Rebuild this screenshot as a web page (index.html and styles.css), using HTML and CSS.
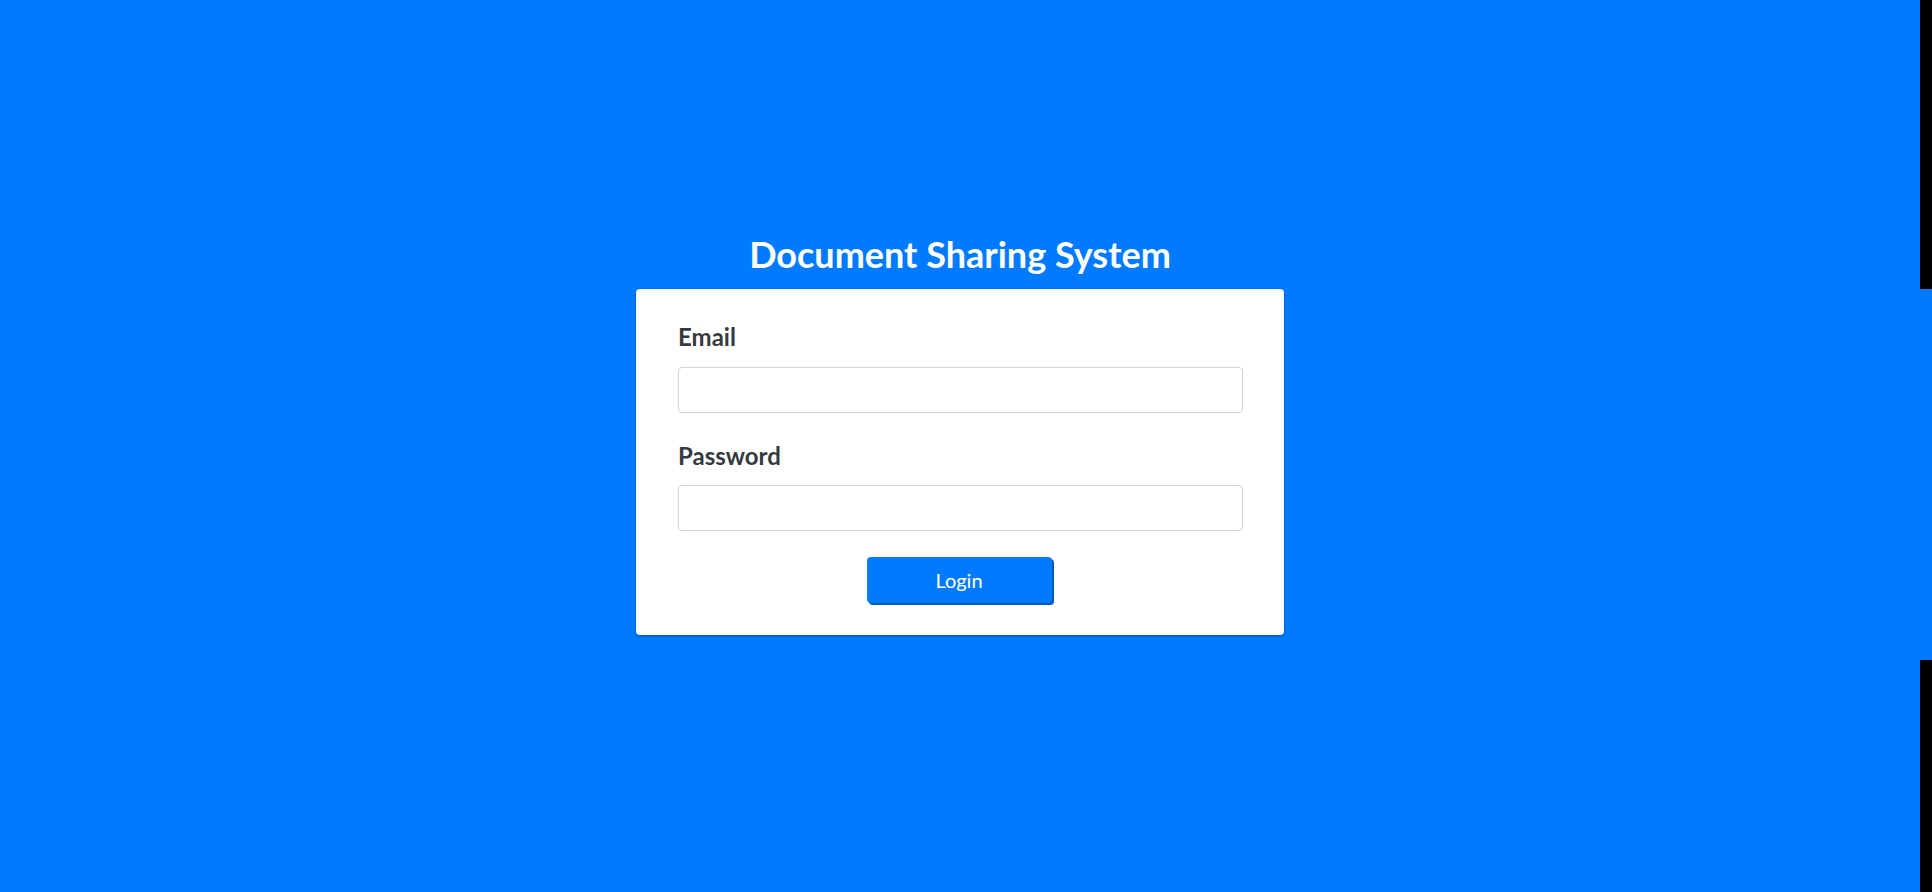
FILE: index.html
```html
<!DOCTYPE html>
<html lang="en">
<head>
<meta charset="utf-8">
<title>Document Sharing System</title>
<link rel="stylesheet" href="styles.css">
</head>
<body>
  <div class="page">
    <h1 class="title">Document Sharing System</h1>
    <div class="stage">
      <form class="card" onsubmit="return false">
        <label class="label" for="email">Email</label>
        <input class="field" id="email" type="email">
        <label class="label label-pw" for="password">Password</label>
        <input class="field" id="password" type="password">
        <div class="actions">
          <button class="btn" type="submit">Login</button>
        </div>
      </form>
    </div>
  </div>
</body>
</html>
```
FILE: styles.css
```css
body {
  margin: 0;
  background: #000;
  font-family: "Source Sans Pro", Lato, "Noto Sans", sans-serif;
}
.page {
  display: flex;
  flex-direction: column;
  width: 1920px;
  min-height: 100vh;
  box-sizing: border-box;
  padding-top: 233px;
  background: #007bff;
}
.title {
  margin: 0 0 13px;
  text-align: center;
  color: #fff;
  font-size: 36px;
  line-height: 43px;
  font-weight: 700;
}
.stage {
  display: flex;
  justify-content: center;
  margin-right: -12px;
  padding-right: 12px;
  padding-bottom: 25px;
  background: #007bff;
}
.card {
  width: 648px;
  box-sizing: border-box;
  background: #fff;
  border-radius: 4px;
  box-shadow: 0 1px 3px rgba(0, 0, 0, 0.35);
  padding: 33px 41px 30px 42px;
  display: flex;
  flex-direction: column;
}
.label {
  display: block;
  color: #343a40;
  font-size: 24px;
  font-weight: 700;
  line-height: 29px;
  margin-bottom: 16px;
}
.label-pw {
  margin-top: 28px;
  margin-bottom: 15px;
}
.field {
  display: block;
  box-sizing: border-box;
  width: 565px;
  height: 46px;
  border: 1px solid #ced4da;
  border-radius: 4px;
  background: #fff;
  margin: 0;
  font-size: 18px;
}
.actions {
  display: flex;
  justify-content: center;
  margin-top: 26px;
}
.btn {
  width: 185px;
  height: 46px;
  margin-right: 3px;
  margin-bottom: 2px;
  border: 0;
  border-radius: 4px;
  background: #007bff;
  color: #fff;
  font-family: inherit;
  font-size: 20px;
  box-shadow: 2px 2px 0 #0059bb;
  cursor: pointer;
}
```
